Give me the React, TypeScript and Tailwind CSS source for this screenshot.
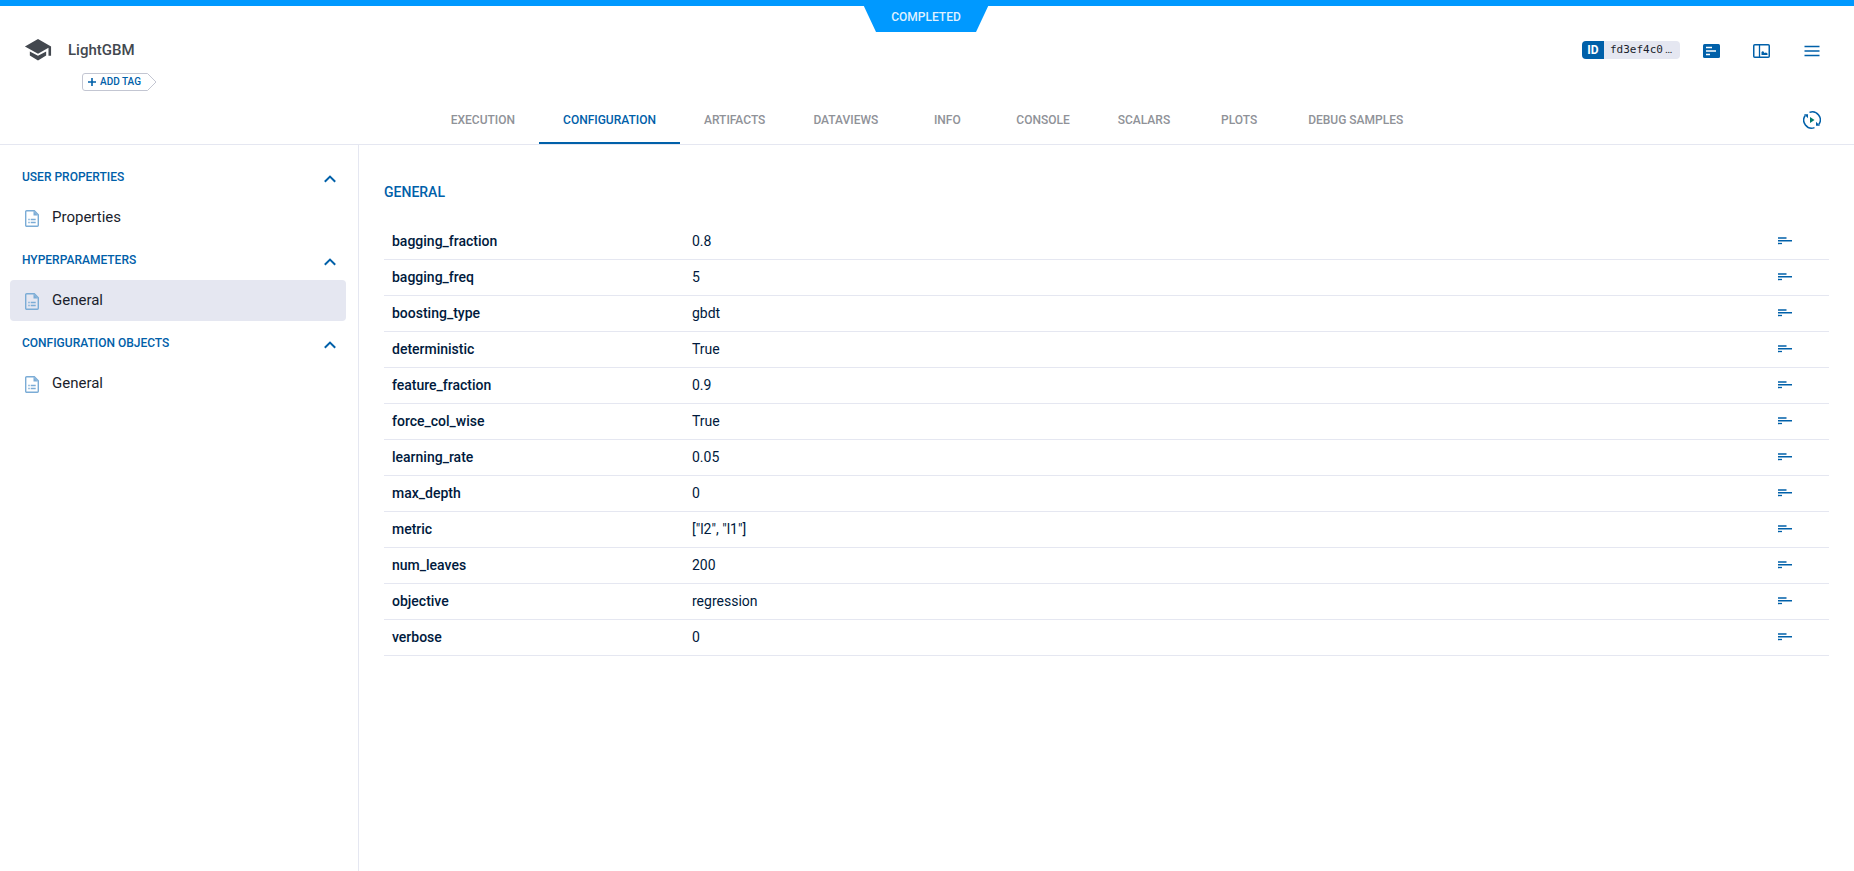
import React from "react";

const tabs = [
  "EXECUTION",
  "CONFIGURATION",
  "ARTIFACTS",
  "DATAVIEWS",
  "INFO",
  "CONSOLE",
  "SCALARS",
  "PLOTS",
  "DEBUG SAMPLES",
];

const sections = [
  { title: "USER PROPERTIES", item: "Properties", selected: false },
  { title: "HYPERPARAMETERS", item: "General", selected: true },
  { title: "CONFIGURATION OBJECTS", item: "General", selected: false },
];

const params: [string, string][] = [
  ["bagging_fraction", "0.8"],
  ["bagging_freq", "5"],
  ["boosting_type", "gbdt"],
  ["deterministic", "True"],
  ["feature_fraction", "0.9"],
  ["force_col_wise", "True"],
  ["learning_rate", "0.05"],
  ["max_depth", "0"],
  ["metric", '["l2", "l1"]'],
  ["num_leaves", "200"],
  ["objective", "regression"],
  ["verbose", "0"],
];

function TrainingIcon() {
  return (
    <svg width="28" height="28" viewBox="0 0 24 24" className="text-[#43484f]" fill="currentColor" aria-hidden="true">
      <path d="M5 13.180v3.640L12 21l7-4.180v-3.640L12 17l-7-3.820zM12 2.600L.8 9 12 15.200 21 10.100V17h2.200V9L12 2.600z" />
    </svg>
  );
}

function AddTag() {
  return (
    <button type="button" aria-label="Add tag" className="grid h-[18px] w-[75px] text-[#0060a9]">
      <svg width="75" height="18" viewBox="0 0 75 18" className="col-start-1 row-start-1" fill="none" stroke="#c3c6d2" aria-hidden="true">
        <path d="M3 .5h62.500l8.500 8.500-8.500 8.500H3a2.500 2.500 0 0 1-2.500-2.500V3A2.500 2.500 0 0 1 3 .5z" />
      </svg>
      <span className="col-start-1 row-start-1 flex h-[18px] items-center gap-1 pl-1.5 text-[10px] leading-none font-medium">
        <svg width="8" height="8" viewBox="0 0 8 8" fill="none" stroke="currentColor" strokeWidth="1.6" aria-hidden="true">
          <path d="M4 0v8M0 4h8" />
        </svg>
        ADD TAG
      </span>
    </button>
  );
}

function DetailsIcon() {
  return (
    <svg width="18" height="14" viewBox="0 0 18 14" aria-hidden="true">
      <rect width="17" height="14" rx="1.500" fill="#0060a9" />
      <path d="M3 3.500h6M3 7h10M3 10.500h4" stroke="#fff" strokeWidth="1.500" />
    </svg>
  );
}

function PanelIcon() {
  return (
    <svg width="18" height="14" viewBox="0 0 18 14" fill="none" stroke="#0060a9" aria-hidden="true">
      <rect x=".75" y=".75" width="15.500" height="12.500" rx="1" strokeWidth="1.500" />
      <path d="M6.500 1v12" strokeWidth="1.300" />
      <path d="M8.500 11V8l1.500-1 1.500 2 1.500-.5 1.500 1V11z" fill="#0060a9" stroke="none" />
    </svg>
  );
}

function MenuIcon() {
  return (
    <svg width="16" height="12" viewBox="0 0 16 12" stroke="#0060a9" strokeWidth="1.500" aria-hidden="true">
      <path d="M.5 1.500h15M.5 6h15M.5 10.500h15" />
    </svg>
  );
}

function RefreshIcon() {
  return (
    <svg width="18" height="18" viewBox="0 0 18 18" fill="none" stroke="#0060a9" strokeWidth="1.500" aria-hidden="true">
      <path d="M6.500 1.400A8 8 0 0 1 15.800 13.500M11.500 16.600A8 8 0 0 1 2.200 4.500" />
      <path d="M1 3.300h4v4zM17 14.700h-4v-4z" fill="#0060a9" stroke="none" />
      <path d="M7 6v6l4.500-3z" fill="#007a6c" stroke="none" />
    </svg>
  );
}

function ChevronUp() {
  return (
    <svg width="12" height="8" viewBox="0 0 12 8" className="mt-1" fill="none" stroke="#0060a9" strokeWidth="2" aria-hidden="true">
      <path d="M.8 6.800L6 1.600l5.200 5.200" />
    </svg>
  );
}

function FileIcon() {
  return (
    <svg width="14" height="17" viewBox="0 0 14 17" className="mt-0.5" fill="none" stroke="#7bacd6" aria-hidden="true">
      <path d="M1.700.7h7.600l4 4v10.600a1 1 0 0 1-1 1H1.700a1 1 0 0 1-1-1V1.700a1 1 0 0 1 1-1z" strokeWidth="1.400" />
      <path d="M8.500 1v4.500H13z" fill="#7bacd6" stroke="none" />
      <path d="M3.300 9.500h1.400M5.700 9.500h5M3.300 12.500h1.400M5.700 12.500h5" strokeWidth="1.400" />
    </svg>
  );
}

function LinesIcon() {
  return (
    <svg width="14" height="8" viewBox="0 0 14 8" stroke="#0060a9" aria-hidden="true">
      <path d="M0 1h8.500M0 3.700h14" strokeWidth="1.400" />
      <path d="M0 6.500h4" strokeWidth="1.300" />
    </svg>
  );
}

export default function App() {
  return (
    <div className="flex min-h-screen flex-col bg-white font-[Roboto,sans-serif] text-[#001a3d]">
      <header className="border-b border-[#e5e7f1]">
        <div className="flex h-[27px] flex-col items-center">
          <div className="h-1.5 w-full shrink-0 bg-[#0099ff]" />
          <div className="-mt-1.5 mr-0.5 flex h-8 w-[130px] shrink-0 items-center justify-center bg-[#0099ff] pt-0.5 text-xs font-medium text-[#dff1ff] [clip-path:polygon(0_0,100%_0,115px_100%,15px_100%)]">
            COMPLETED
          </div>
        </div>
        <div className="flex h-[69px] flex-col">
          <div className="flex h-[46px] items-center justify-between pr-[34px] pl-6">
            <div className="flex items-center gap-4">
              <TrainingIcon />
              <h1 className="text-[15px] font-medium text-[#43484f]">LightGBM</h1>
            </div>
            <div className="flex items-center">
              <div className="mr-[23px] flex h-[18px] overflow-hidden rounded text-[11px] leading-[18px]">
                <span className="w-[22px] bg-[#0060a9] text-center text-xs leading-[18px] font-bold text-white">ID</span>
                <span className="flex w-[76px] gap-0.5 bg-[#e5e7f1] pl-1.5 font-['DejaVu_Sans_Mono',monospace] text-[#1a1e2c]">
                  fd3ef4c0<span className="font-[Roboto,sans-serif]">…</span>
                </span>
              </div>
              <div className="mt-0.5 flex items-center gap-8">
                <button type="button" aria-label="Details"><DetailsIcon /></button>
                <button type="button" aria-label="Side panel"><PanelIcon /></button>
                <button type="button" aria-label="Menu" className="pl-px"><MenuIcon /></button>
              </div>
            </div>
          </div>
          <div className="pl-[82px]">
            <AddTag />
          </div>
        </div>
        <div className="grid grid-cols-[1fr_auto_1fr]">
          <nav className="col-start-2 flex">
            {tabs.map((tab) => (
              <a
                key={tab}
                href="#"
                className={
                  tab === "CONFIGURATION"
                    ? "flex h-12 min-w-[90px] items-center justify-center border-b-2 border-[#0060a9] px-6 pt-0.5 text-xs font-medium text-[#0060a9]"
                    : "flex h-12 min-w-[90px] items-center justify-center border-b-2 border-transparent px-6 pt-0.5 text-xs font-medium text-[#8f9298]"
                }
              >
                {tab}
              </a>
            ))}
          </nav>
          <div className="flex h-12 items-center justify-end pr-[33px]">
            <button type="button" aria-label="Auto refresh"><RefreshIcon /></button>
          </div>
        </div>
      </header>

      <div className="flex grow">
        <aside className="w-[359px] shrink-0 border-r border-[#e5e7f1] pt-2.5 pr-3 pl-2.5">
          {sections.map((s) => (
            <section key={s.title}>
              <button type="button" className="flex h-[42px] w-full items-center justify-between pt-0.5 pr-2.5 pl-3 text-xs font-medium text-[#0060a9]">
                {s.title}
                <ChevronUp />
              </button>
              <a
                href="#"
                className={
                  s.selected
                    ? "flex h-[41px] items-center gap-[13px] rounded bg-[#e5e7f1] pl-[15px] text-[15px] text-[#1a1e2c]"
                    : "flex h-[41px] items-center gap-[13px] rounded pl-[15px] text-[15px] text-[#1a1e2c]"
                }
              >
                <FileIcon />
                {s.item}
              </a>
            </section>
          ))}
        </aside>

        <main className="min-w-0 grow pt-[37px] pr-[25px] pl-[25px]">
          <h2 className="mb-[21px] text-sm font-medium text-[#0060a9]">GENERAL</h2>
          <table className="w-full table-fixed border-collapse text-sm">
            <tbody>
              {params.map(([name, value]) => (
                <tr key={name} className="h-9 border-b border-[#e5e7f1]">
                  <th scope="row" className="w-[300px] p-0 pl-2 text-left font-medium">{name}</th>
                  <td className="p-0 pl-2">{value}</td>
                  <td className="w-[51px] p-0">
                    <button type="button" aria-label={"Show description of " + name} className="flex">
                      <LinesIcon />
                    </button>
                  </td>
                </tr>
              ))}
            </tbody>
          </table>
        </main>
      </div>
    </div>
  );
}
